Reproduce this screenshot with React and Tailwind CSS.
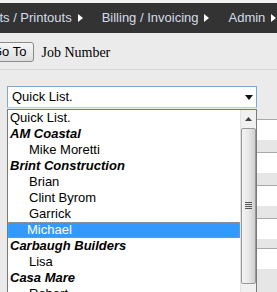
const menu = ["Reports / Printouts", "Billing / Invoicing", "Admin"];

const rows = [
  { label: "Quick List.", kind: "plain" },
  { label: "AM Coastal", kind: "group" },
  { label: "Mike Moretti", kind: "sub" },
  { label: "Brint Construction", kind: "group" },
  { label: "Brian", kind: "sub" },
  { label: "Clint Byrom", kind: "sub" },
  { label: "Garrick", kind: "sub" },
  { label: "Michael", kind: "sub", selected: true },
  { label: "Carbaugh Builders", kind: "group" },
  { label: "Lisa", kind: "sub" },
  { label: "Casa Mare", kind: "group" },
  { label: "Robert", kind: "sub" },
];

function RightArrow() {
  return (
    <svg width="5" height="8" viewBox="0 0 5 8" className="shrink-0">
      <path d="M0 0 L5 4 L0 8 Z" fill="#ffffff" />
    </svg>
  );
}

function ListRow({ row }) {
  const base = "h-[16px] leading-[16px] whitespace-nowrap";
  if (row.selected) {
    return (
      <div className={`${base} pl-[19px] bg-[#3399ff] text-white outline outline-1 outline-dotted outline-[#e0892e] -outline-offset-1`}>
        {row.label}
      </div>
    );
  }
  if (row.kind === "group") {
    return <div className={`${base} pl-[2px] font-bold italic text-black`}>{row.label}</div>;
  }
  if (row.kind === "sub") {
    return <div className={`${base} pl-[21px] text-black`}>{row.label}</div>;
  }
  return <div className={`${base} pl-[2px] text-black`}>{row.label}</div>;
}

export default function App() {
  return (
    <div className="w-[277px] h-[292px] overflow-hidden relative bg-[#ebebeb] font-['Liberation_Sans',Arial,sans-serif] text-[13px]">
      {/* top edge */}
      <div className="h-[3px] bg-[#f2f2f2]" />

      {/* menu bar */}
      <div className="h-[30px] bg-[#333333] flex items-center overflow-hidden text-[#d3dde8]">
        {menu.map((m, i) => (
          <div
            key={m}
            className={`flex items-center gap-[6px] shrink-0 whitespace-nowrap ${i === 0 ? "ml-[-36px]" : "ml-[19px]"}`}
          >
            <span>{m}</span>
            <RightArrow />
          </div>
        ))}
      </div>

      {/* job lookup row */}
      <div className="h-[37px] flex items-center gap-[7px] border-b border-[#d6d6d6]">
        <button className="ml-[-16px] h-[20px] px-[7px] mt-[1px] border border-[#8a8a8a] rounded-[3px] bg-gradient-to-b from-[#f6f6f6] to-[#dedede] text-black leading-none">
          Go To
        </button>
        <span className="font-['Liberation_Serif','Times_New_Roman',serif] text-[14px] text-black mt-[3px]">
          Job Number
        </span>
      </div>

      {/* quick list select */}
      <div className="pt-[16px]">
        <div className="ml-[7px] w-[250px] h-[22px] bg-white border border-[#7fa7d0] border-b-[#b5cfe8] flex items-center justify-between pl-[4px] pr-[3px]">
          <span className="text-black">Quick List.</span>
          <svg width="8" height="5" viewBox="0 0 8 5">
            <path d="M0 0 H8 L4 5 Z" fill="#111" />
          </svg>
        </div>
      </div>

      {/* table behind the dropdown */}
      <div className="ml-[20px]">
        <div className="h-[12px] border-b border-[#a9a9a9]" />
        {[0, 1, 2, 3].map((i) => (
          <div key={i}>
            <div className="h-[20px] bg-white" />
            <div className={`${i === 3 ? "h-[10px]" : "h-[13px]"} bg-[#e6e6e6] border-b border-[#a9a9a9]`} />
          </div>
        ))}
        <div className="h-[20px] bg-white" />
        <div className="h-[30px] bg-[#e6e6e6]" />
      </div>

      {/* open dropdown list */}
      <div className="absolute left-[7px] top-[109px] w-[250px] h-[200px] bg-white border border-[#7a7a7a] flex">
        <div className="flex-1">
          {rows.map((r) => (
            <ListRow key={r.label} row={r} />
          ))}
        </div>
        {/* scrollbar */}
        <div className="w-[16px] bg-[#f0f0f0] border-l border-[#e2e2e2] flex flex-col items-center">
          <div className="h-[18px] flex items-center justify-center">
            <svg width="7" height="4" viewBox="0 0 7 4">
              <path d="M0 4 L3.5 0 L7 4 Z" fill="#404040" />
            </svg>
          </div>
          <div className="w-[15px] h-[156px] border border-[#979797] rounded-[2px] bg-gradient-to-r from-[#f4f4f4] via-[#e8e8e8] to-[#cfcfcf] flex items-center justify-center">
            <div className="flex flex-col gap-[1px] mt-[-2px]">
              <div className="w-[7px] h-[1px] bg-[#555]" />
              <div className="w-[7px] h-[1px] bg-[#555]" />
              <div className="w-[7px] h-[1px] bg-[#555]" />
              <div className="w-[7px] h-[1px] bg-[#555]" />
            </div>
          </div>
        </div>
      </div>
    </div>
  );
}
